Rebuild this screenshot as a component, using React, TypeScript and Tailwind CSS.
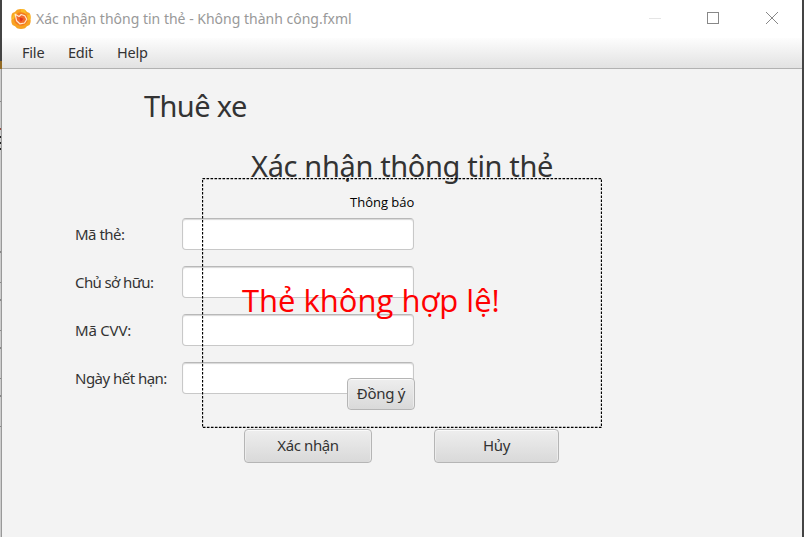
const fields = [
  { label: "Mã thẻ:", spacing: "tracking-[-0.5px]" },
  { label: "Chủ sở hữu:", spacing: "tracking-[-0.6px]" },
  { label: "Mã CVV:", spacing: "tracking-[-0.2px]" },
  { label: "Ngày hết hạn:", spacing: "tracking-[-0.52px]" },
];

const buttonStyle =
  "flex items-center justify-center rounded-[4px] border border-[#b5b5b5] bg-linear-to-b from-[#eeeeee] to-[#d9d9d9] pb-[2px] text-[15px] leading-5 text-[#333333] shadow-[inset_0_1px_0_#fafafa,inset_1px_0_0_#ececec,inset_-1px_0_0_#ececec]";

function AppIcon() {
  return (
    <svg width="20" height="20" viewBox="0 0 20 20" className="shrink-0">
      <path
        d="M6 .7Q10-.6 14 .7q1.6 2.5 4.5 3.4 1.8 2.6.9 5.9.9 3.3-.9 5.9-2.9.9-4.5 3.4-4 1.3-8 0-1.6-2.5-4.5-3.4Q-.3 13.300.6 10-.3 6.700 1.500 4.100 4.400 3.200 6 .7Z"
        fill="#f8a321"
      />
      <path d="M10 0l4 .7 1 4-5-1zM19 5l.5 5-3 2-1-5zM3 5l4-1-4 6H.5z" fill="#fbbd27" />
      <circle cx="10" cy="10" r="6.8" fill="#f47b20" />
      <path
        d="M4.200 5.200 8 7.600 10.200 5.500l3.600 1.200 2 3.600-2.300 3.700-4.700.8-3.200-3Z"
        fill="#f26a2c"
        stroke="#ffe9cf"
        strokeWidth="1.200"
        strokeLinejoin="round"
      />
      <path d="M8.300 8.300l4.200 1.500-2.700 2.900z" fill="#e2331c" />
    </svg>
  );
}

function TitleBar() {
  return (
    <header className="flex h-[38px] items-center bg-white pl-[9px]">
      <AppIcon />
      <h1 className="ml-[5px] text-[14px] leading-5 whitespace-nowrap text-[#999999]">
        Xác nhận thông tin thẻ - Không thành công.fxml
      </h1>
      <div className="mr-[24px] ml-auto flex items-center pb-[2px]">
        <div className="h-px w-3 bg-[#e5e5e5]" />
        <div className="ml-[46px] size-3 border border-[#888888]" />
        <svg className="ml-[47px]" width="12" height="12" viewBox="0 0 12 12" stroke="#888888">
          <path d="M0 0 12 12M12 0 0 12" />
        </svg>
      </div>
    </header>
  );
}

function MenuBar() {
  return (
    <nav className="flex h-[31px] items-center border-b border-[#b2b2b2] bg-linear-to-b from-[#fdfdfd] to-[#e2e2e2] pb-[2px] pl-5 text-[14.5px] leading-5 text-[#333333]">
      <span className="w-[46px] tracking-[-0.2px]">File</span>
      <span className="w-[49px] tracking-[-0.2px]">Edit</span>
      <span className="tracking-[-0.2px]">Help</span>
    </nav>
  );
}

function Dialog() {
  return (
    <section className="absolute top-[178px] left-[202px] h-[250px] w-[400px]">
      <svg className="absolute inset-0" width="400" height="250" fill="none" stroke="#000">
        <rect x=".5" y=".5" width="399" height="249" strokeWidth="1.300" strokeDasharray="2.600 1.400" />
      </svg>
      <div className="flex h-full flex-col font-['Open_Sans','Noto_Sans',sans-serif]">
        <h3 className="mt-[14px] ml-[148px] text-[13px] leading-5 whitespace-nowrap text-black">Thông báo</h3>
        <p className="mt-[68px] ml-[40px] text-[31px] leading-10 whitespace-nowrap text-[#ff0000]">Thẻ không hợp lệ!</p>
        <button className={`${buttonStyle} mt-[58px] ml-[145px] h-8 w-[68px] shrink-0 font-['Noto_Sans',sans-serif]`}>
          <span className="tracking-[-0.3px] whitespace-nowrap">Đồng ý</span>
        </button>
      </div>
    </section>
  );
}

export default function App() {
  return (
    <div className="relative flex h-[537px] w-[804px] overflow-hidden bg-[#f3f3f3] font-['Noto_Sans',sans-serif]">
      <div className="flex w-[2px] shrink-0 flex-col border-r border-[#999999] bg-[#cccccc]">
        <div className="-mr-px h-[61px] w-[2px] bg-[#444444]" />
        <div className="-mr-px h-[8px] w-[2px] bg-[#936b26]" />
        <div className="mt-[32px] h-px bg-[#888888]" />
        <div className="mt-[26px] h-[2px] bg-[#924c42]" />
        <div className="mt-[6px] h-[2px] bg-[#222222]" />
        <div className="mt-[4px] h-[2px] bg-[#222222]" />
        <div className="mt-[4px] h-[2px] bg-[#222222]" />
        <div className="mt-[101px] h-[2px] bg-[#888888]" />
        <div className="mt-[29px] h-px bg-[#888888]" />
        <div className="mt-[16px] h-[2px] bg-[#888888]" />
        <div className="mt-[29px] h-px bg-[#888888]" />
        <div className="mt-[16px] h-[2px] bg-[#888888]" />
        <div className="mt-[29px] h-px bg-[#888888]" />
        <div className="mt-[16px] h-[2px] bg-[#888888]" />
        <div className="mt-[29px] h-px bg-[#888888]" />
      </div>
      <div className="min-w-0 flex-1">
        <TitleBar />
        <MenuBar />
        <main className="text-[#333333]">
          <p className="mt-[17px] ml-[142px] h-10 text-[29px] leading-10 tracking-[-0.6px] whitespace-nowrap">Thuê xe</p>
          <h2 className="mt-[20px] ml-[249px] h-10 text-[29px] leading-10 tracking-[-0.35px] whitespace-nowrap">
            Xác nhận thông tin thẻ
          </h2>
          <form className="mt-[32px] ml-[73px] flex w-[339px] flex-col gap-4">
            {fields.map((field) => (
              <label key={field.label} className="flex h-8 items-center">
                <span className={`w-[107px] text-[15px] leading-5 whitespace-nowrap ${field.spacing}`}>{field.label}</span>
                <input className="h-8 w-[232px] rounded-[4px] border border-[#c8c8c8] border-t-[#b8b8b8] bg-white shadow-[inset_0_1px_1px_#d8d8d8] outline-none" />
              </label>
            ))}
          </form>
          <div className="mt-[35px] ml-[242px] flex gap-[62px]">
            <button className={`${buttonStyle} h-[34px] w-[128px]`}>
              <span className="tracking-[-0.4px]">Xác nhận</span>
            </button>
            <button className={`${buttonStyle} h-[34px] w-[125px]`}>
              <span className="tracking-[-0.4px]">Hủy</span>
            </button>
          </div>
        </main>
      </div>
      <div className="w-[2px] shrink-0 bg-[#444444]" />
      <Dialog />
    </div>
  );
}
